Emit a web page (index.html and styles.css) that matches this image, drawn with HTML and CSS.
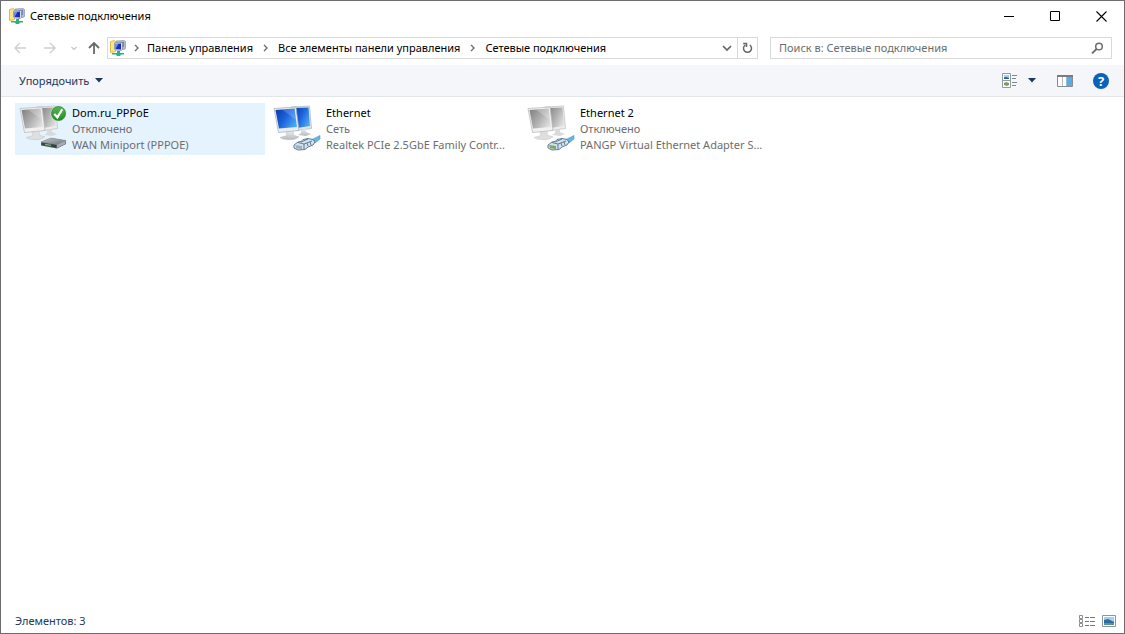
FILE: index.html
```html
<!DOCTYPE html>
<html lang="ru">
<head>
<meta charset="utf-8">
<title>Сетевые подключения</title>
<link rel="stylesheet" href="styles.css">
</head>
<body>
<svg class="sprite" aria-hidden="true">
  <defs>
    <linearGradient id="blue" x1="0" y1=".2" x2="1" y2=".8"><stop offset="0" stop-color="#0d3fae"/><stop offset=".45" stop-color="#1c62dc"/><stop offset="1" stop-color="#4fb0f6"/></linearGradient>
    <linearGradient id="grey" x1="0" y1=".2" x2="1" y2=".8"><stop offset="0" stop-color="#858585"/><stop offset=".5" stop-color="#b0b0b0"/><stop offset="1" stop-color="#e4e4e4"/></linearGradient>
    <linearGradient id="metal" x1="0" y1="0" x2="0" y2="1"><stop offset="0" stop-color="#e9edf0"/><stop offset="1" stop-color="#b4bac0"/></linearGradient>
    <linearGradient id="green" x1="0" y1="0" x2="0" y2="1"><stop offset="0" stop-color="#58b957"/><stop offset="1" stop-color="#218a23"/></linearGradient>
    <linearGradient id="box" x1="0" y1="0" x2="1" y2="1"><stop offset="0" stop-color="#c3c8cc"/><stop offset="1" stop-color="#6d757b"/></linearGradient>
  </defs>
  <symbol id="net" viewBox="0 0 16 16">
    <path d="M.5 1.500l4-1 1 1v10l-5 1z" fill="#f8e58c" stroke="#d9bd50"/>
    <path d="M6 1l8-.5 1.500 1v7l-1.500 1H7z" fill="#b7bec9" stroke="#8b95a5" stroke-width=".7"/>
    <path d="M10 2h4v5h-4z" fill="#6f86bb"/>
    <path d="M4.500 3l7-.5 1 1v6l-1 1-6-.5-1-1z" fill="#d8dfec" stroke="#7384a8" stroke-width=".7"/>
    <path d="M5.500 4l5.500-.5v6L5.500 9z" fill="#1d2fae"/><path d="M5.500 4l3-.2L6.500 7.500l-1 .5z" fill="#6b8cf0"/>
    <path d="M7 11h3v2h4v1.500h-3L10 16H7l-1-1.500H2V13h5z" fill="#27b37b"/>
  </symbol>
  <symbol id="monitors-blue" viewBox="0 0 42 36">
    <path d="M18 2L36.500 1l2 22.500-15 2z" fill="#dfe5ea" stroke="#a9b5bf" stroke-width=".7"/><path d="M20 3l15.500-.5L37 21l-13 2z" fill="url(#blue)"/>
    <path d="M28 25v3l-3 2 8 1 5-2-5-2v-3z" fill="url(#metal)"/>
    <path d="M1 3.500L23 2l3 23.500-20.500 2z" fill="#e9edf0" stroke="#a2adb6" stroke-width=".7"/><path d="M2.500 5L21.500 3.500 24 22 6 23.500z" fill="url(#blue)"/><path d="M9 4.500l12-1L23 15z" fill="#fff" opacity=".18"/>
    <path d="M13 27l7-.7.500 4 5.500 1.500Q22 36 10 34l-3-1.500 7-2z" fill="url(#metal)" stroke="#b1b9bf" stroke-width=".5"/>
  </symbol>
  <symbol id="monitors-grey" viewBox="0 0 42 36">
    <path d="M18 2L36.500 1l2 22.500-15 2z" fill="#ededed" stroke="#bdbdbd" stroke-width=".7"/><path d="M20 3l15.500-.5L37 21l-13 2z" fill="url(#grey)"/>
    <path d="M28 25v3l-3 2 8 1 5-2-5-2v-3z" fill="#dadada"/>
    <path d="M1 3.500L23 2l3 23.500-20.500 2z" fill="#f1f1f1" stroke="#b4b4b4" stroke-width=".7"/><path d="M2.500 5L21.500 3.500 24 22 6 23.500z" fill="url(#grey)"/><path d="M9 4.500l12-1L23 15z" fill="#fff" opacity=".22"/>
    <path d="M13 27l7-.7.500 4 5.500 1.500Q22 36 10 34l-3-1.500 7-2z" fill="#dfdfdf" stroke="#c3c3c3" stroke-width=".5"/>
  </symbol>
  <symbol id="plug" viewBox="0 0 28 16">
    <path d="M18 5l6-3 3-1.500V4l-5 4z" fill="#64b7e2" stroke="#3f9bcb" stroke-width=".6"/>
    <path d="M1 10l4-3 3-.5 2-2 5-1 5 1 2 2.500-2 3-5 2-3 2.500-7 .5-4-2z" fill="#d3e2ef" stroke="#566f88" stroke-width=".9"/>
    <path d="M5 7.500l6 1.500 8-3M11 9v5M8 7l7-3M14 8l1 3M17 7l1 3" fill="none" stroke="#56718d" stroke-width=".9"/>
    <path class="pins" d="M2 10l7 1v3l-6-1z"/><path d="M4 10.500v3M6 10.700v3M8 11v3" stroke="#56717f" stroke-width=".6"/>
  </symbol>
  <symbol id="caret" viewBox="0 0 8 5"><path d="M0 0h8L4 4.500z" fill="#1e395b"/></symbol>
  <symbol id="chev" viewBox="0 0 5 8"><path d="M1 1l3 3-3 3" fill="none" stroke="#6e6e6e" stroke-width="1.400"/></symbol>
</svg>

<div class="window">
  <header class="titlebar">
    <svg class="app-icon"><use href="#net"/></svg>
    <h1 class="title">Сетевые подключения</h1>
    <button class="win-btn" aria-label="Свернуть"><svg width="11" height="11"><path d="M0 5.500h10" stroke="#000"/></svg></button>
    <button class="win-btn" aria-label="Развернуть"><svg width="11" height="11"><path d="M.5.500h9v9h-9z" fill="none" stroke="#000"/></svg></button>
    <button class="win-btn" aria-label="Закрыть"><svg width="11" height="11"><path d="M.5.500l10 10M10.500.500l-10 10" stroke="#000" stroke-width="1.100"/></svg></button>
  </header>

  <nav class="navbar">
    <div class="history">
      <button class="icon-btn" aria-label="Назад"><svg width="12" height="12"><path d="M12 6H1M6 1L1 6l5 5" fill="none" stroke="#cfcfcf" stroke-width="1.400"/></svg></button>
      <button class="icon-btn" aria-label="Вперёд"><svg width="12" height="12"><path d="M0 6h11M6 1l5 5-5 5" fill="none" stroke="#cfcfcf" stroke-width="1.400"/></svg></button>
      <button class="icon-btn recent" aria-label="Последние расположения"><svg width="6" height="5"><path d="M.5 1L3 3.500 5.500 1" fill="none" stroke="#c4c4c4" stroke-width="1.200"/></svg></button>
      <button class="icon-btn" aria-label="Вверх"><svg width="12" height="12"><path d="M6 12V1M1 6l5-5 5 5" fill="none" stroke="#6a6a6a" stroke-width="1.800"/></svg></button>
    </div>
    <div class="address">
      <svg class="app-icon"><use href="#net"/></svg>
      <svg class="chev root"><use href="#chev"/></svg>
      <a class="crumb" href="#">Панель управления</a>
      <svg class="chev"><use href="#chev"/></svg>
      <a class="crumb" href="#">Все элементы панели управления</a>
      <svg class="chev"><use href="#chev"/></svg>
      <a class="crumb" href="#">Сетевые подключения</a>
      <button class="icon-btn drop" aria-label="Предыдущие расположения"><svg width="10" height="7"><path d="M1 1l4 4 4-4" fill="none" stroke="#666" stroke-width="1.700"/></svg></button>
      <button class="icon-btn refresh" aria-label="Обновить"><svg width="11" height="12"><path d="M7.800 3A4 4 0 1 1 3.200 3M1.200 1.500H4.500V5" fill="none" stroke="#666" stroke-width="1.500"/></svg></button>
    </div>
    <label class="search">
      <input class="search-input" type="text" placeholder="Поиск в: Сетевые подключения" aria-label="Поиск">
      <svg width="13" height="12"><circle cx="8" cy="4.500" r="3.300" fill="none" stroke="#6e6e6e" stroke-width="1.500"/><path d="M5.500 7L1 11.500" stroke="#6e6e6e" stroke-width="1.800"/></svg>
    </label>
  </nav>

  <div class="toolbar">
    <button class="organize">Упорядочить <svg class="caret"><use href="#caret"/></svg></button>
    <div class="tools">
      <button class="icon-btn view" aria-label="Изменить представление">
        <svg width="16" height="15"><path d="M.5.500h8v14h-8zM.5 7.500h8" fill="#fff" stroke="#929aa2"/><path d="M2 2h5v4H2z" fill="#a9cdea"/><path d="M2 4.500l2-.5 3 1v1H2z" fill="#31588f"/><path d="M2 10l2-1 3 1v2l-2 1-3-1z" fill="#87975a"/><path d="M10 2.500h5M10 5.500h4M10 9.500h5M10 12.500h4" stroke="#7d8790"/></svg>
      </button>
      <button class="icon-btn view-more" aria-label="Дополнительно"><svg class="caret"><use href="#caret"/></svg></button>
      <button class="icon-btn pane" aria-label="Область просмотра"><svg width="16" height="12"><path d="M.5.500h15v11H.500z" fill="#fff" stroke="#8c8c8c"/><path d="M0 1h16" stroke="#7b7b7b" stroke-width="2"/><path d="M5.500 2v9" stroke="#bbb"/><path d="M9 2h6v9H9z" fill="#58ace4"/><path d="M9.500 2v9" stroke="#8fc3e6"/></svg></button>
      <button class="help" aria-label="Справка">?</button>
    </div>
  </div>

  <main class="items">
    <button class="item item-hover">
      <span class="pic">
        <svg class="pc"><use href="#monitors-grey"/></svg>
        <svg class="badge" viewBox="0 0 18 18"><circle cx="9" cy="9" r="8" fill="url(#green)" stroke="#d3ead3"/><circle cx="9" cy="9" r="7.400" fill="none" stroke="#257f28" stroke-width=".7"/><path d="M4.500 9.500l3.300 3.500L13 4.500" fill="none" stroke="#fff" stroke-width="2.400"/></svg>
        <svg class="device" viewBox="0 0 28 16"><path d="M2 7l10-4 15 2.500v3.500l-9 4.500L2 10.500z" fill="#555e65"/><path d="M2 7l10-4 15 2.500-9 4z" fill="url(#box)" stroke="#8b949a" stroke-width=".5"/><path d="M3 8l14 2v2.500L3 9.800z" fill="#343d44"/><path d="M6 9.300l6 1" stroke="#79b77f" stroke-width="1.200"/><path d="M18 9.800l8.500-4v3L18 13z" fill="#a5adb3"/></svg>
      </span>
      <span class="info"><span class="name">Dom.ru_PPPoE</span><span>Отключено</span><span>WAN Miniport (PPPOE)</span></span>
    </button>
    <button class="item">
      <span class="pic"><svg class="pc"><use href="#monitors-blue"/></svg><svg class="device pins-off"><use href="#plug"/></svg></span>
      <span class="info"><span class="name">Ethernet</span><span>Сеть</span><span>Realtek PCIe 2.5GbE Family Contr...</span></span>
    </button>
    <button class="item">
      <span class="pic"><svg class="pc"><use href="#monitors-grey"/></svg><svg class="device pins-on"><use href="#plug"/></svg></span>
      <span class="info"><span class="name">Ethernet 2</span><span>Отключено</span><span>PANGP Virtual Ethernet Adapter S...</span></span>
    </button>
  </main>

  <footer class="status">
    <span>Элементов: 3</span>
    <div class="modes">
      <button class="icon-btn" aria-label="Таблица"><svg width="16" height="13"><path d="M.5.500h3v3h-3zM.5 4.500h3v3h-3zM.5 8.500h3v3h-3z" fill="#fff" stroke="#8c8c8c"/><path d="M6 2.500h4M11 2.500h5M6 6.500h4M11 6.500h5M6 10.500h4M11 10.500h5" stroke="#777"/></svg></button>
      <button class="icon-btn" aria-label="Крупные значки"><svg width="14" height="12"><path d="M.5.500h13v11H.500z" fill="#fff" stroke="#8996a0"/><path d="M2 2h10v8H2z" fill="#9fd0ee"/><path d="M2 5l4-1 6 3v3H2z" fill="#2d6a9d"/><path d="M2 8h10v2H2z" fill="#5d9778"/></svg></button>
    </div>
  </footer>
</div>
</body>
</html>
```
FILE: styles.css
```css
* { box-sizing: border-box; }
body {
  margin: 0;
  font: 11px/16px "Noto Sans", "Open Sans", sans-serif;
  color: #000;
}
button {
  margin: 0;
  padding: 0;
  border: 0;
  background: none;
  font: inherit;
  color: inherit;
}
svg { display: block; flex: none; }
.sprite { position: absolute; width: 0; height: 0; }
.window {
  display: flex;
  flex-direction: column;
  min-height: 100vh;
  border: 1px solid #6d6d70;
  background: #fff;
}
.app-icon { width: 16px; height: 16px; }

.titlebar { display: flex; align-items: center; height: 30px; padding-left: 8px; }
.title { flex: 1; margin: 0 0 0 5px; font-size: 11px; font-weight: 400; }
.win-btn { display: flex; align-items: center; justify-content: center; width: 46px; height: 28px; }

.navbar { display: flex; align-items: center; height: 34px; padding: 0 12px 0 13px; }
.icon-btn { display: flex; align-items: center; justify-content: center; }
.history { display: flex; align-items: center; gap: 18px; width: 93px; }
.recent { margin: 0 -7px 0 -3px; }
.address {
  display: flex;
  align-items: center;
  flex: 1;
  height: 22px;
  padding-left: 2px;
  border: 1px solid #d9d9d9;
  white-space: nowrap;
}
.chev { width: 5px; height: 8px; margin: 0 10px; }
.chev.root { margin: 0 8px; }
.crumb { color: inherit; text-decoration: none; }
.drop { width: 20px; margin-left: auto; }
.refresh { width: 20px; height: 20px; border-left: 1px solid #d9d9d9; }
.search {
  display: flex;
  align-items: center;
  flex: 0 1 342px;
  height: 22px;
  margin-left: 12px;
  padding: 0 7px 0 8px;
  border: 1px solid #d9d9d9;
}
.search-input { flex: 1; min-width: 0; padding: 0; border: 0; outline: 0; background: none; font: inherit; }
.search-input::placeholder { color: #6d6d6d; opacity: 1; }

.toolbar {
  display: flex;
  align-items: center;
  justify-content: space-between;
  height: 32px;
  padding: 0 15px 0 18px;
  border-bottom: 1px solid #e2e6ea;
  background: #f4f6f9;
  color: #1e395b;
}
.organize { display: flex; align-items: center; gap: 6px; }
.caret { width: 8px; height: 5px; }
.tools { display: flex; align-items: center; }
.view-more { margin-left: 10px; }
.pane { margin-left: 21px; }
.help {
  width: 16px;
  height: 16px;
  margin-left: 20px;
  border-radius: 50%;
  background: #0a63b8;
  color: #fff;
  font-size: 13px;
  font-weight: 700;
}

.items {
  display: flex;
  flex-wrap: wrap;
  align-content: flex-start;
  flex: 1;
  gap: 4px;
  padding: 6px 14px;
}
.item { display: flex; gap: 5px; width: 250px; height: 52px; padding: 2px 4px; text-align: left; }
.item-hover { background: #e5f3ff; }
.pic { position: relative; flex: none; width: 48px; height: 48px; }
.pc { width: 42px; height: 36px; }
.badge { position: absolute; top: 0; right: 0; width: 17px; height: 17px; }
.device { position: absolute; right: 0; bottom: 2px; width: 28px; height: 16px; }
.pins-off { fill: #b9cbd8; }
.pins-on { fill: #8fc04d; }
.info { display: flex; flex-direction: column; min-width: 0; color: #6d6d6d; white-space: nowrap; }
.name { color: #000; }

.status {
  display: flex;
  align-items: center;
  justify-content: space-between;
  height: 24px;
  padding: 0 8px 0 14px;
  color: #1e395b;
}
.modes { display: flex; align-items: center; gap: 7px; }
```
